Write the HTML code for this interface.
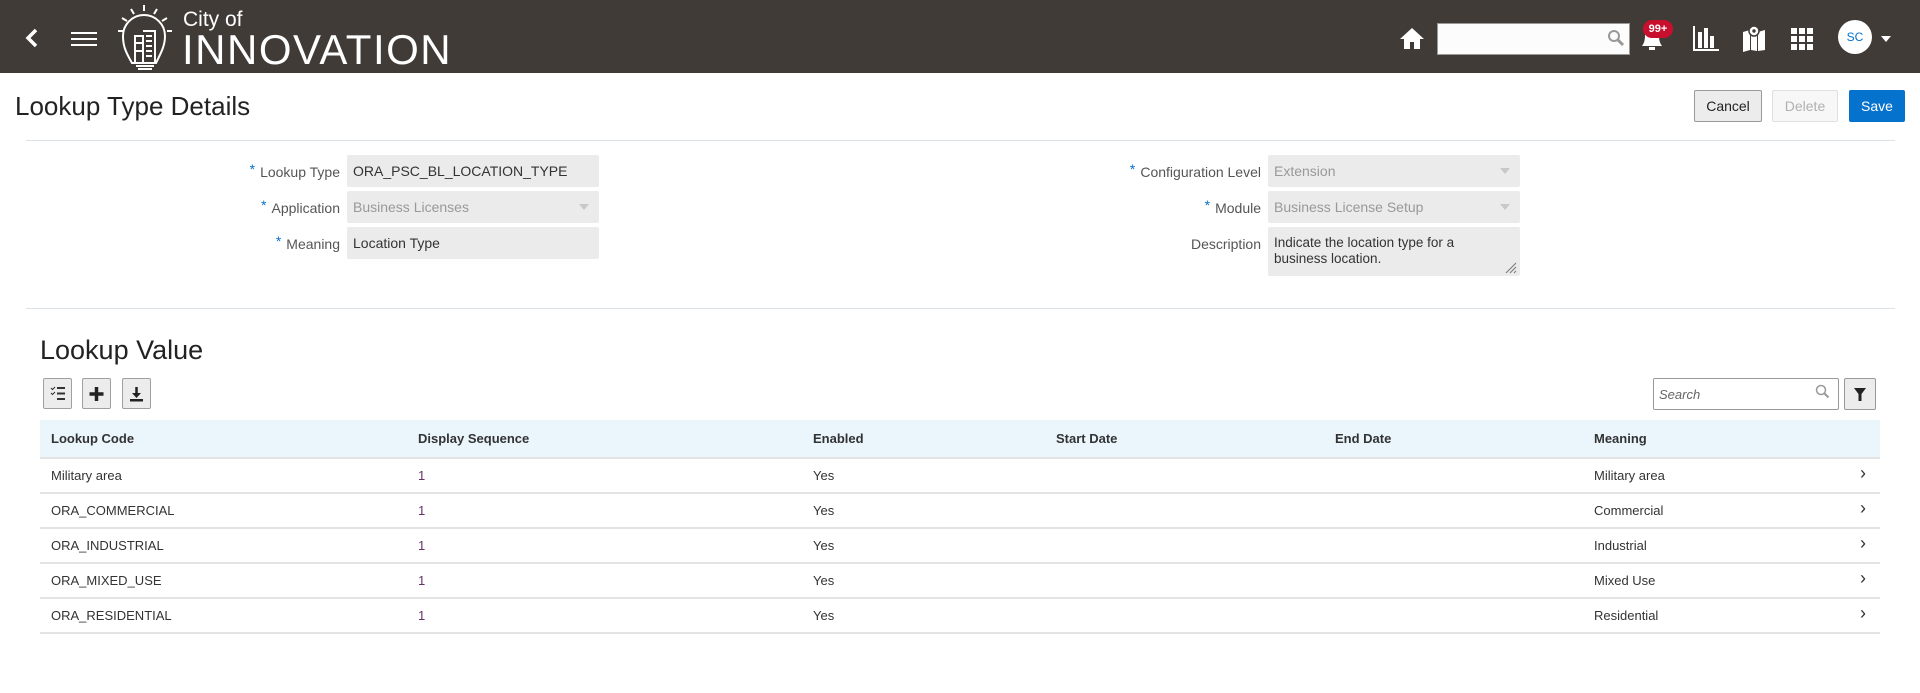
<!DOCTYPE html>
<html><head><style>
*{box-sizing:border-box;margin:0;padding:0}
body{width:1920px;height:693px;background:#fff;font-family:"Liberation Sans",sans-serif;color:#333;position:relative;overflow:hidden}
.abs{position:absolute}
.hdr{left:0;top:0;width:1920px;height:73px;background:#403b37}
.btn{position:absolute;height:32px;border:1px solid #c4ced7;border-radius:2px;font-size:14px;display:flex;align-items:center;justify-content:center}
.lbl{position:absolute;font-size:14px;color:#555;text-align:right}
.lbl b{color:#0572ce;font-weight:normal;margin-right:5px;position:relative;top:-3px}
.inp{position:absolute;background:#ebebeb;border-radius:2px;font-size:14px;padding:0 6px;display:flex;align-items:center}
.dd{position:absolute;right:10px;top:13px;width:0;height:0;border-left:5px solid transparent;border-right:5px solid transparent;border-top:6px solid #c8c8c8}
.tb{position:absolute;top:378px;width:29px;height:31px;background:#ececec;border:1px solid #a0a0a0;border-radius:2px}
table{position:absolute;left:40px;top:420px;width:1840px;border-collapse:collapse;font-size:13px}
th{background:#eaf5fc;height:38px;text-align:left;font-weight:bold;color:#333;padding-left:11px;border-bottom:2px solid #e3e3e3}
td{height:35px;padding-left:11px;border-bottom:2px solid #e3e3e3;color:#333}
td.s{color:#663366}
td.c{font-size:18px;padding-left:14px;vertical-align:top;padding-top:4px}
</style></head><body>
<div class="abs hdr"></div>
<svg class="abs" style="left:24px;top:27px" width="16" height="22" viewBox="0 0 16 22"><path d="M12 3 L4 11 L12 19" stroke="#fff" stroke-width="3.5" fill="none"/></svg>
<div class="abs" style="left:71px;top:32px;width:26px;height:2px;background:#fff"></div>
<div class="abs" style="left:71px;top:38px;width:26px;height:2px;background:#fff"></div>
<div class="abs" style="left:71px;top:44px;width:26px;height:2px;background:#fff"></div>
<svg class="abs" style="left:115px;top:3px" width="60" height="68" viewBox="0 0 60 68" fill="none" stroke="#fff" stroke-width="2">
<path d="M29 2v6M16 6l3 5M42 6l-3 5M7 15l5 3M52 15l-5 3M3 28h5M52 28h5"/>
<path d="M17 60 C10 48 8 42 8 33 A21 21 0 0 1 50 33 C50 42 47 48 41 60 Z"/>
<path d="M20 60V33h8v27M28 28h12v32M31 33h6M31 38h6M31 43h6M31 48h6M31 53h6M20 40h8M20 48h8"/>
<path d="M20 60h20M21 63h18M23 66h14"/>
</svg>
<div class="abs" style="left:183px;top:8px;color:#fff;font-size:21px">City of</div>
<div class="abs" style="left:182px;top:28px;color:#fff;font-size:42px;letter-spacing:1.5px;line-height:44px">INNOVATION</div>
<svg class="abs" style="left:1399px;top:26px" width="26" height="24" viewBox="0 0 26 24"><path d="M13 2 L1 13 h4 v10 h6 v-7 h4 v7 h6 V13 h4 Z" fill="#fff"/></svg>
<div class="abs" style="left:1437px;top:23px;width:193px;height:32px;background:#fcfcfc;border:1px solid #999"></div>
<svg class="abs" style="left:1607px;top:29px" width="18" height="18" viewBox="0 0 18 18"><circle cx="7" cy="7" r="5" stroke="#999" stroke-width="2" fill="none"/><path d="M11 11l5 5" stroke="#999" stroke-width="3"/></svg>
<svg class="abs" style="left:1638px;top:26px" width="28" height="26" viewBox="0 0 28 26"><path d="M4 20 C7 16 7 12 7 9 A7 7 0 0 1 21 9 C21 12 21 16 24 20 Z" fill="#fff"/><rect x="11" y="21" width="6" height="3" fill="#fff"/></svg>
<div class="abs" style="left:1643px;top:20px;width:30px;height:18px;border-radius:9px;background:#c8102e;color:#fff;font-size:11px;font-weight:bold;text-align:center;line-height:18px">99+</div>
<svg class="abs" style="left:1692px;top:26px" width="28" height="26" viewBox="0 0 28 26" fill="#fff"><rect x="1" y="0" width="2" height="25"/><rect x="1" y="23" width="26" height="2"/><rect x="6" y="6" width="4" height="16"/><rect x="12" y="2" width="4" height="20"/><rect x="18" y="10" width="4" height="12"/></svg>
<svg class="abs" style="left:1742px;top:24px" width="24" height="28" viewBox="0 0 24 28"><path d="M1 8 L8 6 L8 26 L1 28 Z M9 6 L15 8 L15 27 L9 26 Z M16 8 L23 6 L23 26 L16 27 Z" fill="#fff"/><circle cx="12" cy="7" r="5" fill="#fff" stroke="#403b37" stroke-width="1.5"/><circle cx="12" cy="7" r="1.7" fill="#403b37"/></svg>
<svg class="abs" style="left:1791px;top:28px" width="22" height="22" viewBox="0 0 22 22" fill="#fff"><rect x="0" y="0" width="6" height="6"/><rect x="8" y="0" width="6" height="6"/><rect x="16" y="0" width="6" height="6"/><rect x="0" y="8" width="6" height="6"/><rect x="8" y="8" width="6" height="6"/><rect x="16" y="8" width="6" height="6"/><rect x="0" y="16" width="6" height="6"/><rect x="8" y="16" width="6" height="6"/><rect x="16" y="16" width="6" height="6"/></svg>
<div class="abs" style="left:1838px;top:20px;width:34px;height:34px;border-radius:50%;background:#fff;color:#0572ce;font-size:12px;text-align:center;line-height:34px">SC</div>
<div class="abs" style="left:1881px;top:36px;border-left:5px solid transparent;border-right:5px solid transparent;border-top:6px solid #fff"></div>

<div class="abs" style="left:15px;top:91px;font-size:26px;color:#222">Lookup Type Details</div>
<div class="btn" style="left:1694px;top:90px;width:68px;background:#ececec;border-color:#999;color:#222">Cancel</div>
<div class="btn" style="left:1772px;top:90px;width:66px;background:#f7f7f7;border-color:#e0e0e0;color:#b0b0b0">Delete</div>
<div class="btn" style="left:1849px;top:90px;width:56px;background:#0572ce;border-color:#0572ce;color:#fff">Save</div>
<div class="abs" style="left:26px;top:140px;width:1869px;height:1px;background:#dde2e6"></div>

<div class="lbl" style="left:150px;width:190px;top:164px"><b>*</b>Lookup Type</div>
<div class="inp" style="left:347px;top:155px;width:252px;height:32px;color:#333">ORA_PSC_BL_LOCATION_TYPE</div>
<div class="lbl" style="left:150px;width:190px;top:200px"><b>*</b>Application</div>
<div class="inp" style="left:347px;top:191px;width:252px;height:32px;color:#999">Business Licenses<span class="dd"></span></div>
<div class="lbl" style="left:150px;width:190px;top:236px"><b>*</b>Meaning</div>
<div class="inp" style="left:347px;top:227px;width:252px;height:32px;color:#333">Location Type</div>

<div class="lbl" style="left:1000px;width:261px;top:164px"><b>*</b>Configuration Level</div>
<div class="inp" style="left:1268px;top:155px;width:252px;height:32px;color:#999">Extension<span class="dd"></span></div>
<div class="lbl" style="left:1000px;width:261px;top:200px"><b>*</b>Module</div>
<div class="inp" style="left:1268px;top:191px;width:252px;height:32px;color:#999">Business License Setup<span class="dd"></span></div>
<div class="lbl" style="left:1000px;width:261px;top:236px">Description</div>
<div class="inp" style="left:1268px;top:227px;width:252px;height:49px;color:#333;align-items:flex-start;padding:8px 50px 0 6px;font-size:13.5px;line-height:16px">Indicate the location type for a business location.</div>
<svg class="abs" style="left:1505px;top:262px" width="12" height="12" viewBox="0 0 12 12" stroke="#777"><path d="M1 11L11 1M5 11L11 5M9 11L11 9"/></svg>
<div class="abs" style="left:26px;top:308px;width:1869px;height:1px;background:#dde2e6"></div>

<div class="abs" style="left:40px;top:335px;font-size:27px;color:#222">Lookup Value</div>
<div class="tb" style="left:43px"><svg width="27" height="29" viewBox="0 0 27 29"><path d="M7 9l1.5 1.5L11 8M7 14l1.5 1.5L11 13" stroke="#333" fill="none"/><path d="M13 9h8M13 14.5h8M13 20h8" stroke="#333" stroke-width="2"/></svg></div>
<div class="tb" style="left:82px"><svg width="27" height="29" viewBox="0 0 27 29"><path d="M13.5 8v14M6.5 15h14" stroke="#222" stroke-width="3.5"/></svg></div>
<div class="tb" style="left:122px"><svg width="27" height="29" viewBox="0 0 27 29"><path d="M13.5 8v9" stroke="#222" stroke-width="2.5"/><path d="M9 14l4.5 5 4.5-5z" fill="#222"/><rect x="7" y="20" width="13" height="2.5" fill="#222"/></svg></div>
<div class="abs" style="left:1653px;top:378px;width:186px;height:32px;border:1px solid #999;border-radius:2px;font-size:13px;font-style:italic;color:#666;padding:8px 5px">Search</div>
<svg class="abs" style="left:1815px;top:384px" width="16" height="16" viewBox="0 0 16 16"><circle cx="6" cy="6" r="4.5" stroke="#999" stroke-width="1.5" fill="none"/><path d="M9.5 9.5l4 4" stroke="#999" stroke-width="2"/></svg>
<div class="abs" style="left:1844px;top:378px;width:32px;height:32px;background:#ececec;border:1px solid #999;border-radius:2px"><svg width="30" height="30" viewBox="0 0 30 30"><path d="M9 9h12l-4.5 6v7h-3v-7z" fill="#222"/></svg></div>

<table>
<tr><th style="width:367px">Lookup Code</th><th style="width:395px">Display Sequence</th><th style="width:243px">Enabled</th><th style="width:279px">Start Date</th><th style="width:259px">End Date</th><th style="width:263px">Meaning</th><th></th></tr>
<tr><td>Military area</td><td class="s">1</td><td>Yes</td><td></td><td></td><td>Military area</td><td class="c">›</td></tr>
<tr><td>ORA_COMMERCIAL</td><td class="s">1</td><td>Yes</td><td></td><td></td><td>Commercial</td><td class="c">›</td></tr>
<tr><td>ORA_INDUSTRIAL</td><td class="s">1</td><td>Yes</td><td></td><td></td><td>Industrial</td><td class="c">›</td></tr>
<tr><td>ORA_MIXED_USE</td><td class="s">1</td><td>Yes</td><td></td><td></td><td>Mixed Use</td><td class="c">›</td></tr>
<tr><td>ORA_RESIDENTIAL</td><td class="s">1</td><td>Yes</td><td></td><td></td><td>Residential</td><td class="c">›</td></tr>
</table>
</body></html>
